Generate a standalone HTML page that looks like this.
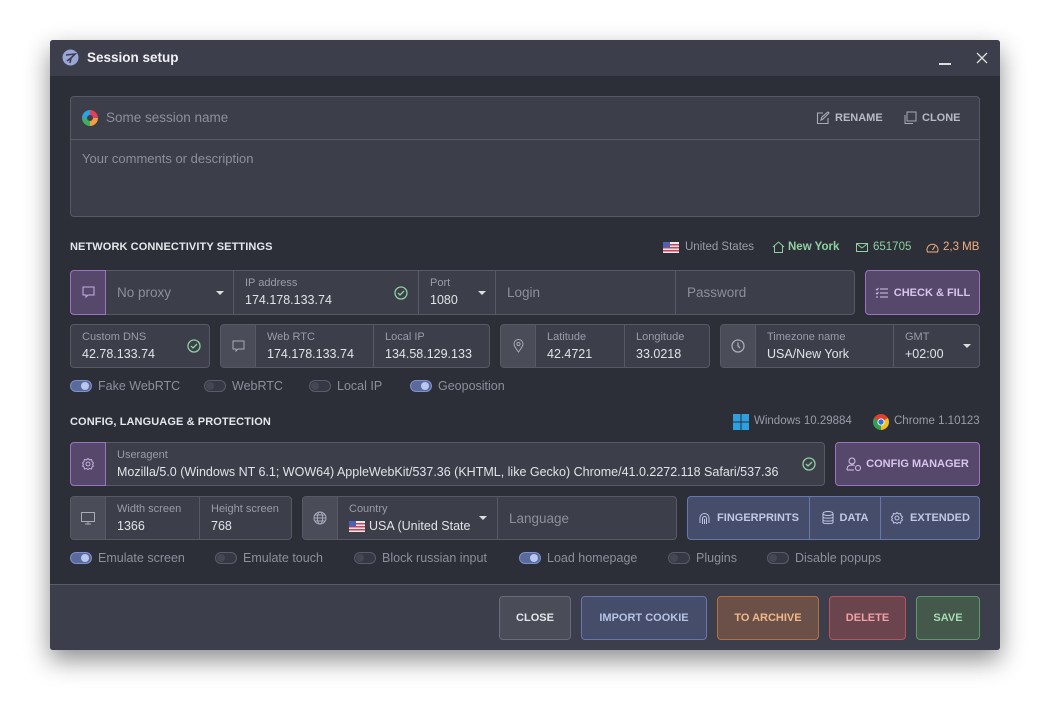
<!DOCTYPE html>
<html><head><meta charset="utf-8"><style>
*{box-sizing:border-box;margin:0;padding:0}
body{width:1050px;height:710px;background:#fff;font-family:"Liberation Sans",sans-serif;position:relative;overflow:hidden}
.win{position:absolute;left:50px;top:40px;width:950px;height:610px;background:#2c2e38;border-radius:3px;box-shadow:0 10px 25px rgba(0,0,0,.45);overflow:hidden}
.a{position:absolute}
.tb{left:0;top:0;width:950px;height:36px;background:#3c3e4b}
.box{position:absolute;background:#3c3e4a;border:1px solid #575966;border-radius:4px;overflow:hidden}
.seg{position:absolute;top:0;bottom:0;border-left:1px solid #575966}
.ic{position:absolute;top:0;bottom:0;left:0;width:35px;background:#4a4c58;border-right:1px solid #575966;display:flex;align-items:center;justify-content:center}
.lbl{position:absolute;left:11px;top:6px;font-size:11px;color:#9a9ca8}
.val{position:absolute;left:11px;top:22px;font-size:12.5px;color:#e2e3e8;white-space:nowrap}
.ph{position:absolute;left:11px;top:0;bottom:0;display:flex;align-items:center;font-size:13.5px;color:#8d8f9b}
.h{font-size:11px;font-weight:bold;color:#e6e7ec;letter-spacing:.1px}
.tg{position:absolute;font-size:12.5px;color:#8d8f9b;display:flex;align-items:center;white-space:nowrap}
.sw{width:22px;height:12px;border-radius:6px;border:1px solid #5a5c68;background:#363845;margin-right:6px;position:relative}
.sw::after{content:"";position:absolute;top:1px;left:1px;width:8px;height:8px;border-radius:50%;background:#454754}
.sw.on{background:#5a6a9a;border-color:#7d8fcc}
.sw.on::after{left:10px;background:#b8c6f0}
.btn{position:absolute;border-radius:4px;display:flex;align-items:center;justify-content:center;font-size:11px;font-weight:bold;white-space:nowrap}
.dd{position:absolute;width:0;height:0;border-left:4px solid transparent;border-right:4px solid transparent;border-top:4px solid #ddd}
.m{font-size:11.5px}
</style></head><body>
<div class="win">
 <div class="a tb"></div>
 <svg class="a" style="left:12px;top:9px" width="17" height="17" viewBox="0 0 17 17"><circle cx="8.5" cy="8.5" r="8" fill="#9aa6d6"/><path d="M4 6 L13 5 L9 9 L8 14 M9 9 L5 12" stroke="#3c3e4b" stroke-width="1.6" fill="none"/></svg>
 <div class="a" style="left:37px;top:10px;font-size:13.5px;font-weight:bold;color:#f0f0f4">Session setup</div>
 <div class="a" style="left:889px;top:23px;width:12px;height:1.5px;background:#ddd"></div>
 <svg class="a" style="left:926px;top:12px" width="12" height="12"><path d="M1 1L11 11M11 1L1 11" stroke="#ddd" stroke-width="1.3"/></svg>

 <div class="box" style="left:20px;top:56px;width:910px;height:121px">
  <div class="a" style="left:0;right:0;top:42px;border-top:1px solid #575966"></div>
  <svg class="a" style="left:11px;top:13px" width="16" height="16" viewBox="0 0 16 16"><path d="M8 0A8 8 0 0 1 16 8H11A3 3 0 0 0 8 5Z" fill="#e0405a"/><path d="M16 8A8 8 0 0 1 8 16V11A3 3 0 0 0 11 8Z" fill="#f0a040"/><path d="M8 16A8 8 0 0 1 0 8H5A3 3 0 0 0 8 11Z" fill="#40b060"/><path d="M0 8A8 8 0 0 1 8 0V5A3 3 0 0 0 5 8Z" fill="#30a0e0"/></svg>
  <div class="a" style="left:35px;top:13px;font-size:13.5px;color:#8d8f9b">Some session name</div>
  <svg class="a" style="left:745px;top:14px" width="14" height="14" viewBox="0 0 14 14"><path d="M7 2H1.5V12.5H12V7M5 9L6 6L12 1L13 2L7 8Z" stroke="#a8abb8" fill="none" stroke-width="1.1"/></svg>
  <div class="a" style="left:764px;top:15px;font-size:11px;font-weight:bold;color:#b8bac6">RENAME</div>
  <svg class="a" style="left:832px;top:14px" width="14" height="14" viewBox="0 0 14 14"><rect x="4" y="1" width="9" height="9" stroke="#a8abb8" fill="none"/><path d="M2 4V12.5H10" stroke="#a8abb8" fill="none"/></svg>
  <div class="a" style="left:851px;top:15px;font-size:11px;font-weight:bold;color:#b8bac6">CLONE</div>
  <div class="a" style="left:11px;top:54px;font-size:13px;color:#8d8f9b">Your comments or description</div>
 </div>

 <div class="a h" style="left:20px;top:201px">NETWORK CONNECTIVITY SETTINGS</div>
 <svg class="a" style="left:613px;top:202px" width="16" height="11"><rect width="16" height="11" fill="#e8e8f0"/><rect y="2" width="16" height="1.5" fill="#d04050"/><rect y="5" width="16" height="1.5" fill="#d04050"/><rect y="8" width="16" height="1.5" fill="#d04050"/><rect width="7" height="5.5" fill="#5060b0"/></svg>
 <div class="a m" style="left:635px;top:201px;color:#9a9ca8">United States</div>
 <svg class="a" style="left:722px;top:201px" width="13" height="12"><path d="M1 6L6.5 1L12 6M2.5 5V11.5H10.5V5" stroke="#8fd0a0" fill="none"/></svg>
 <div class="a m" style="left:738px;top:201px;color:#8fd0a0;font-weight:bold">New York</div>
 <svg class="a" style="left:806px;top:203px" width="12" height="9"><rect x=".5" y=".5" width="11" height="8" stroke="#8fd0a0" fill="none"/><path d="M1 1L6 5L11 1" stroke="#8fd0a0" fill="none"/></svg>
 <div class="a m" style="left:823px;top:201px;color:#8fd0a0">651705</div>
 <svg class="a" style="left:876px;top:202px" width="13" height="11"><path d="M1.5 10A5.5 5.5 0 1 1 11.5 10Z" stroke="#f0b080" fill="none"/><path d="M6.5 8L9 4" stroke="#f0b080"/></svg>
 <div class="a m" style="left:893px;top:201px;color:#f0b080">2,3 MB</div>

 <div class="box" style="left:20px;top:230px;width:785px;height:45px">
  <div class="ic" style="background:#56486b"><svg width="13" height="13"><path d="M1 1H12V9H6L4 11V9H1Z" stroke="#c8b0e0" fill="none"/></svg></div>
  <div class="ph" style="left:46px">No proxy</div><div class="dd" style="left:145px;top:20px"></div>
  <div class="seg" style="left:162px;width:185px"><div class="lbl">IP address</div><div class="val">174.178.133.74</div>
   <svg class="a" style="left:160px;top:15px" width="14" height="14"><circle cx="7" cy="7" r="6" stroke="#8fd0a0" fill="none" stroke-width="1.3"/><path d="M4 7L6 9L10 5" stroke="#8fd0a0" fill="none" stroke-width="1.3"/></svg></div>
  <div class="seg" style="left:347px;width:77px"><div class="lbl">Port</div><div class="val">1080</div><div class="dd" style="left:59px;top:20px"></div></div>
  <div class="seg" style="left:424px;width:180px"><div class="ph">Login</div></div>
  <div class="seg" style="left:604px;width:181px"><div class="ph">Password</div></div>
 </div>
 <div class="a" style="left:20px;top:230px;width:36px;height:45px;border:1px solid #9a72c4;border-radius:4px 0 0 4px"></div>
 <div class="btn" style="left:815px;top:230px;width:115px;height:45px;background:#56486b;border:1px solid #9a72c4;color:#d8c4ee"><svg width="13" height="12" style="margin-right:6px"><path d="M5 2H13M5 6H13M5 10H13M1 2L2 3L3.5 1M1 6L2 7L3.5 5M1 10H3" stroke="#d8c4ee" fill="none"/></svg>CHECK &amp; FILL</div>

 <div class="box" style="left:20px;top:284px;width:140px;height:44px"><div class="lbl">Custom DNS</div><div class="val">42.78.133.74</div>
  <svg class="a" style="left:116px;top:14px" width="14" height="14"><circle cx="7" cy="7" r="6" stroke="#8fd0a0" fill="none" stroke-width="1.3"/><path d="M4 7L6 9L10 5" stroke="#8fd0a0" fill="none" stroke-width="1.3"/></svg></div>
 <div class="box" style="left:170px;top:284px;width:270px;height:44px">
  <div class="ic"><svg width="13" height="13"><path d="M1 1H12V9H6L4 11V9H1Z" stroke="#a8abb8" fill="none"/></svg></div>
  <div class="seg" style="left:35px;border:0;width:117px"><div class="lbl">Web RTC</div><div class="val">174.178.133.74</div></div>
  <div class="seg" style="left:152px;width:118px"><div class="lbl">Local IP</div><div class="val">134.58.129.133</div></div>
 </div>
 <div class="box" style="left:450px;top:284px;width:210px;height:44px">
  <div class="ic"><svg width="11" height="14"><path d="M5.5 13C2 8.5 1 6.5 1 5A4.5 4.5 0 0 1 10 5C10 6.5 9 8.5 5.5 13Z" stroke="#a8abb8" fill="none"/><circle cx="5.5" cy="5" r="1.6" stroke="#a8abb8" fill="none"/></svg></div>
  <div class="seg" style="left:35px;border:0;width:88px"><div class="lbl">Latitude</div><div class="val">42.4721</div></div>
  <div class="seg" style="left:123px;width:87px"><div class="lbl">Longitude</div><div class="val">33.0218</div></div>
 </div>
 <div class="box" style="left:670px;top:284px;width:260px;height:44px">
  <div class="ic"><svg width="14" height="14"><circle cx="7" cy="7" r="6" stroke="#a8abb8" fill="none" stroke-width="1.3"/><path d="M7 3.5V7L9 9" stroke="#a8abb8" fill="none" stroke-width="1.3"/></svg></div>
  <div class="seg" style="left:35px;border:0;width:137px"><div class="lbl">Timezone name</div><div class="val">USA/New York</div></div>
  <div class="seg" style="left:172px;width:88px"><div class="lbl">GMT</div><div class="val">+02:00</div><div class="dd" style="left:69px;top:19px"></div></div>
 </div>

 <div class="tg" style="left:20px;top:339px"><span class="sw on"></span>Fake WebRTC</div>
 <div class="tg" style="left:154px;top:339px"><span class="sw"></span>WebRTC</div>
 <div class="tg" style="left:259px;top:339px"><span class="sw"></span>Local IP</div>
 <div class="tg" style="left:360px;top:339px"><span class="sw on"></span>Geoposition</div>

 <div class="a h" style="left:20px;top:376px">CONFIG, LANGUAGE &amp; PROTECTION</div>
 <svg class="a" style="left:683px;top:374px" width="16" height="16"><rect width="7.5" height="7.5" fill="#2ea0e0"/><rect x="8.5" width="7.5" height="7.5" fill="#2ea0e0"/><rect y="8.5" width="7.5" height="7.5" fill="#2ea0e0"/><rect x="8.5" y="8.5" width="7.5" height="7.5" fill="#2ea0e0"/></svg>
 <div class="a m" style="left:704px;top:375px;color:#9a9ca8">Windows 10.29884</div>
 <svg class="a" style="left:823px;top:374px" width="16" height="16" viewBox="0 0 16 16"><circle cx="8" cy="8" r="8" fill="#e04030"/><path d="M8 8L1.1 4A8 8 0 0 0 8 16Z" fill="#30a050"/><path d="M8 8L8 16A8 8 0 0 0 14.9 4Z" fill="#f0c020"/><circle cx="8" cy="8" r="3.6" fill="#fff"/><circle cx="8" cy="8" r="2.7" fill="#3070e0"/></svg>
 <div class="a m" style="left:844px;top:375px;color:#9a9ca8">Chrome 1.10123</div>

 <div class="box" style="left:20px;top:402px;width:755px;height:44px">
  <div class="ic" style="background:#56486b"><svg width="14" height="14" viewBox="0 0 14 14"><circle cx="7" cy="7" r="2" stroke="#c8b0e0" fill="none"/><path d="M7 1.5L8.5 3L10.5 2.5L11 4.5L12.5 6L11.5 7.5L12.5 9L11 10L10.5 12L8.5 11.5L7 12.5L5.5 11.5L3.5 12L3 10L1.5 9L2.5 7.5L1.5 6L3 4.5L3.5 2.5L5.5 3Z" stroke="#c8b0e0" fill="none"/></svg></div>
  <div class="seg" style="left:35px;border:0;right:0"><div class="lbl">Useragent</div><div class="val">Mozilla/5.0 (Windows NT 6.1; WOW64) AppleWebKit/537.36 (KHTML, like Gecko) Chrome/41.0.2272.118 Safari/537.36</div></div>
  <svg class="a" style="left:731px;top:14px" width="14" height="14"><circle cx="7" cy="7" r="6" stroke="#8fd0a0" fill="none" stroke-width="1.3"/><path d="M4 7L6 9L10 5" stroke="#8fd0a0" fill="none" stroke-width="1.3"/></svg>
 </div>
 <div class="a" style="left:20px;top:402px;width:36px;height:44px;border:1px solid #9a72c4;border-radius:4px 0 0 4px"></div>
 <div class="btn" style="left:785px;top:402px;width:145px;height:44px;background:#56486b;border:1px solid #9a72c4;color:#d8c4ee"><svg width="16" height="14" style="margin-right:4px"><circle cx="6" cy="4" r="3" stroke="#d8c4ee" fill="none"/><path d="M1 13C1 9 3 8 6 8C7 8 8 8.3 8.5 8.6M1 13H8" stroke="#d8c4ee" fill="none"/><circle cx="12" cy="11" r="2.5" stroke="#d8c4ee" fill="none"/></svg>CONFIG MANAGER</div>

 <div class="box" style="left:20px;top:456px;width:222px;height:44px">
  <div class="ic"><svg width="14" height="13"><rect x=".5" y=".5" width="13" height="9" stroke="#a8abb8" fill="none"/><path d="M4 12H10M7 10V12" stroke="#a8abb8"/></svg></div>
  <div class="seg" style="left:35px;border:0;width:93px"><div class="lbl">Width screen</div><div class="val">1366</div></div>
  <div class="seg" style="left:128px;width:94px"><div class="lbl">Height screen</div><div class="val">768</div></div>
 </div>
 <div class="box" style="left:252px;top:456px;width:375px;height:44px">
  <div class="ic"><svg width="14" height="14"><circle cx="7" cy="7" r="6" stroke="#a8abb8" fill="none"/><ellipse cx="7" cy="7" rx="2.7" ry="6" stroke="#a8abb8" fill="none"/><path d="M1 7H13M2 4H12M2 10H12" stroke="#a8abb8"/></svg></div>
  <div class="seg" style="left:35px;border:0;width:159px"><div class="lbl">Country</div>
   <svg class="a" style="left:11px;top:24px" width="16" height="11"><rect width="16" height="11" fill="#e8e8f0"/><rect y="2" width="16" height="1.5" fill="#d04050"/><rect y="5" width="16" height="1.5" fill="#d04050"/><rect y="8" width="16" height="1.5" fill="#d04050"/><rect width="7" height="5.5" fill="#5060b0"/></svg>
   <div class="val" style="left:31px">USA (United State</div><div class="dd" style="left:141px;top:19px"></div></div>
  <div class="seg" style="left:194px;width:181px"><div class="ph">Language</div></div>
 </div>
 <div class="box" style="left:637px;top:456px;width:293px;height:44px;background:#454d6a;border-color:#6677b0;color:#c0c8e6;font-size:11px;font-weight:bold">
  <div class="a" style="left:0;width:121px;top:0;bottom:0;display:flex;align-items:center;justify-content:center"><svg width="13" height="13" style="margin-right:6px"><path d="M2 11V6A4.5 4.5 0 0 1 11 6V11M4.5 12V6.5A2 2 0 0 1 8.5 6.5V12M6.5 12V7" stroke="#c0c8e6" fill="none"/></svg>FINGERPRINTS</div>
  <div class="a" style="left:121px;width:71px;top:0;bottom:0;border-left:1px solid #6677b0;display:flex;align-items:center;justify-content:center"><svg width="12" height="14" style="margin-right:6px"><ellipse cx="6" cy="2.5" rx="5" ry="2" stroke="#c0c8e6" fill="none"/><path d="M1 2.5V11.5C1 13 11 13 11 11.5V2.5M1 6C1 7.5 11 7.5 11 6M1 9C1 10.5 11 10.5 11 9" stroke="#c0c8e6" fill="none"/></svg>DATA</div>
  <div class="a" style="left:192px;right:0;top:0;bottom:0;border-left:1px solid #6677b0;display:flex;align-items:center;justify-content:center"><svg width="14" height="14" viewBox="0 0 14 14" style="margin-right:6px"><circle cx="7" cy="7" r="2" stroke="#c0c8e6" fill="none"/><path d="M7 1.5L8.5 3L10.5 2.5L11 4.5L12.5 6L11.5 7.5L12.5 9L11 10L10.5 12L8.5 11.5L7 12.5L5.5 11.5L3.5 12L3 10L1.5 9L2.5 7.5L1.5 6L3 4.5L3.5 2.5L5.5 3Z" stroke="#c0c8e6" fill="none"/></svg>EXTENDED</div>
 </div>

 <div class="tg" style="left:20px;top:511px"><span class="sw on"></span>Emulate screen</div>
 <div class="tg" style="left:165px;top:511px"><span class="sw"></span>Emulate touch</div>
 <div class="tg" style="left:304px;top:511px"><span class="sw"></span>Block russian input</div>
 <div class="tg" style="left:469px;top:511px"><span class="sw on"></span>Load homepage</div>
 <div class="tg" style="left:618px;top:511px"><span class="sw"></span>Plugins</div>
 <div class="tg" style="left:717px;top:511px"><span class="sw"></span>Disable popups</div>

 <div class="a" style="left:0;top:544px;width:950px;height:66px;background:#3c3e4b;border-top:1px solid #5a5c6a"></div>
 <div class="btn" style="left:449px;top:556px;width:72px;height:44px;background:#4a4c58;border:1px solid #6a6c78;color:#e4e4ea">CLOSE</div>
 <div class="btn" style="left:531px;top:556px;width:126px;height:44px;background:#454d6a;border:1px solid #6677b0;color:#b8c2e4">IMPORT COOKIE</div>
 <div class="btn" style="left:667px;top:556px;width:102px;height:44px;background:#6a5048;border:1px solid #b8703a;color:#f0b888">TO ARCHIVE</div>
 <div class="btn" style="left:779px;top:556px;width:77px;height:44px;background:#6a454e;border:1px solid #b8545e;color:#f0a0a8">DELETE</div>
 <div class="btn" style="left:866px;top:556px;width:64px;height:44px;background:#44584c;border:1px solid #5c9a68;color:#a8dab4">SAVE</div>
</div>
</body></html>
